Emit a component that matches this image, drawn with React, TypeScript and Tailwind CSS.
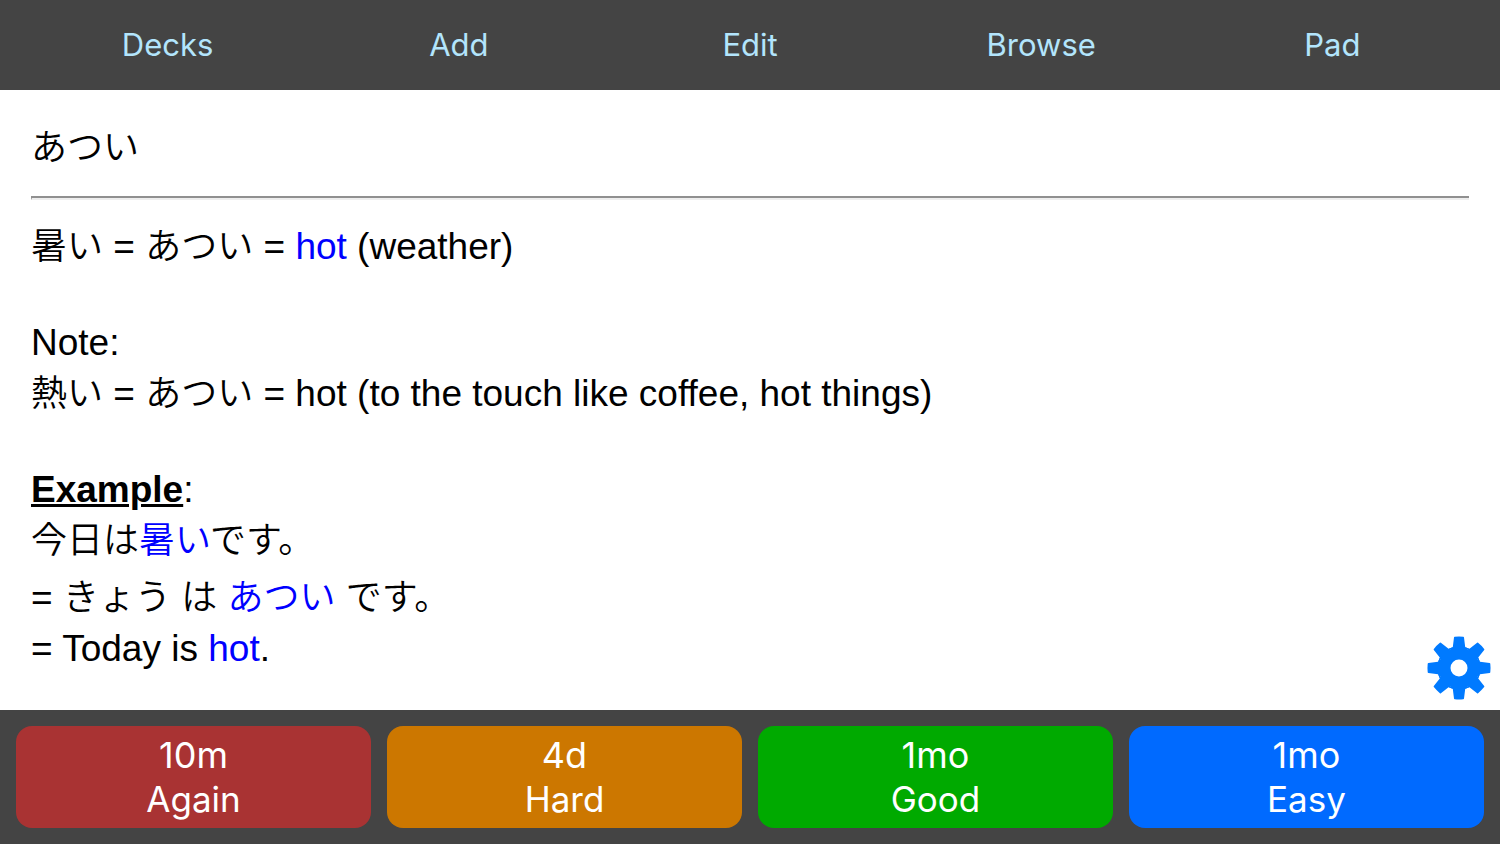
import React from "react";

const navItems = ["Decks", "Add", "Edit", "Browse", "Pad"];

const answers = [
    { interval: "10m", label: "Again", color: "bg-[#a93333]" },
    { interval: "4d", label: "Hard", color: "bg-[#cc7700]" },
    { interval: "1mo", label: "Good", color: "bg-[#00aa00]" },
    { interval: "1mo", label: "Easy", color: "bg-[#006aff]" },
];

const Blue: React.FC<{ children: React.ReactNode }> = ({ children }) => (
    <span className="text-[#0000ff]">{children}</span>
);

const Ja: React.FC<{ children: React.ReactNode }> = ({ children }) => (
    <span lang="ja" className="text-[36px] font-[350]">{children}</span>
);

const GearIcon: React.FC = () => (
    <svg viewBox="-32 -32 64 64" className="w-16 h-16" fill="#007aff" aria-hidden="true">
        {[0, 45, 90, 135, 180, 225, 270, 315].map((angle) => (
            <path
                key={angle}
                d="M-10.5 -19 L-6.2 -21 L-5 -30.6 Q-5 -31.2 -4.3 -31.3 Q0 -31.8 4.3 -31.3 Q5 -31.2 5 -30.6 L6.2 -21 L10.5 -19 Z"
                transform={`rotate(${angle})`}
            />
        ))}
        <circle r="14.5" fill="none" stroke="#007aff" strokeWidth="12" />
    </svg>
);

const App: React.FC = () => {
    return (
        <div className="min-h-screen flex flex-col bg-white text-black font-['Liberation_Sans','Noto_Sans_CJK_JP',sans-serif]">
            <nav className="px-[22px] py-[25px] flex items-center bg-[#444444] font-[Inter,sans-serif]">
                {navItems.map((item) => (
                    <button key={item} className="flex-1 text-[31px] leading-10 text-[#b3e5fc]">
                        {item}
                    </button>
                ))}
            </nav>
            <main className="relative flex-1 px-[31px] pt-[29px] text-[37px] leading-[45px]">
                <p className="leading-[57px]">
                    <Ja>あつい</Ja>
                </p>
                <hr className="mt-5 mb-[18px] border-y-2 border-l border-t-[#909090] border-l-[#909090] border-b-[#eeeeee]" />
                <p className="leading-[57px]">
                    <Ja>暑い</Ja> = <Ja>あつい</Ja> = <Blue>hot</Blue> (weather)
                </p>
                <br />
                <p>Note:</p>
                <p className="leading-[57px]">
                    <Ja>熱い</Ja> = <Ja>あつい</Ja> = hot (to the touch like coffee, hot things)
                </p>
                <br />
                <p>
                    <b className="underline">Example</b>:
                </p>
                <p className="leading-[57px]">
                    <Ja>今日は<Blue>暑い</Blue>です。</Ja>
                </p>
                <p className="leading-[57px]">
                    = <Ja>きょう</Ja> <Ja>は</Ja> <Blue><Ja>あつい</Ja></Blue> <Ja>です。</Ja>
                </p>
                <p>
                    = Today is <Blue>hot</Blue>.
                </p>
                <button aria-label="Settings" className="absolute right-[9px] bottom-[10px]">
                    <GearIcon />
                </button>
            </main>
            <footer className="p-4 flex gap-4 bg-[#444444] font-[Inter,sans-serif]">
                {answers.map((answer) => (
                    <button
                        key={answer.label}
                        className={`flex-1 py-[7px] rounded-2xl text-white text-[35px] leading-[44px] ${answer.color}`}
                    >
                        <span className="block text-[36px]">{answer.interval}</span>
                        <span className="block">{answer.label}</span>
                    </button>
                ))}
            </footer>
        </div>
    );
};

export default App;
